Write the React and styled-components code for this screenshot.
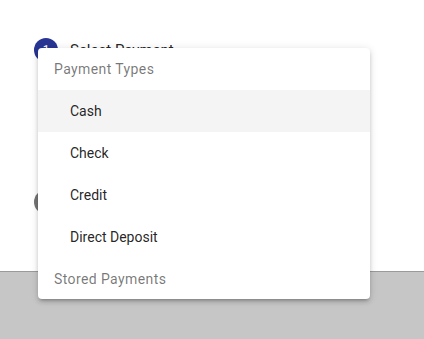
import React from "react";
import styled, { createGlobalStyle } from "styled-components";

const Global = createGlobalStyle`
  html, body { margin: 0; padding: 0; height: 100%; }
  body { font-family: Roboto, "Noto Sans", sans-serif; background: #c6c6c6; }
  #root { height: 100%; }
`;

const Page = styled.div`
  position: relative;
  display: flex;
  flex-direction: column;
  width: 424px;
  height: 339px;
  overflow: hidden;
`;

const Content = styled.div`
  height: 271px;
  background: #fff;
  display: flex;
  flex-direction: column;
  padding: 38px 0 0 34px;
  box-sizing: border-box;
  gap: 128px;
`;

const Footer = styled.div`
  flex: 1;
  background: #c6c6c6;
  border-top: 1px solid #9a9a9a;
`;

const Step = styled.div`
  display: flex;
  align-items: center;
  gap: 12px;
  height: 24px;
`;

const StepIcon = styled.div`
  width: 24px;
  height: 24px;
  border-radius: 50%;
  background: ${(p) => (p.$active ? "#283593" : "#757575")};
  color: #fff;
  font-size: 12px;
  display: flex;
  align-items: center;
  justify-content: center;
`;

const StepLabel = styled.span`
  font-size: 15px;
  color: rgba(0, 0, 0, 0.87);
`;

const Menu = styled.div`
  position: absolute;
  left: 38px;
  top: 48px;
  width: 332px;
  background: #fff;
  border-radius: 4px;
  box-shadow: 0 3px 3px -2px rgba(0, 0, 0, 0.2), 0 3px 4px 0 rgba(0, 0, 0, 0.14),
    0 1px 8px 0 rgba(0, 0, 0, 0.12);
  display: flex;
  flex-direction: column;
  overflow: hidden;
`;

const Row = styled.div`
  height: ${(p) => (p.$last ? "41px" : "42px")};
  display: flex;
  align-items: center;
  font-size: 14px;
  padding-left: ${(p) => (p.$header ? "16px" : "32px")};
  color: ${(p) => (p.$header ? "rgba(0,0,0,0.54)" : "rgba(0,0,0,0.87)")};
  background: ${(p) => (p.$selected ? "#f4f4f4" : "transparent")};
  letter-spacing: ${(p) => (p.$header ? "0.4px" : "0")};
`;

export default function App() {
  return (
    <Page>
      <Global />
      <Content>
        <Step>
          <StepIcon $active>1</StepIcon>
          <StepLabel>Select Payment</StepLabel>
        </Step>
        <Step>
          <StepIcon>2</StepIcon>
        </Step>
      </Content>
      <Footer />
      <Menu>
        <Row $header>Payment Types</Row>
        <Row $selected>Cash</Row>
        <Row>Check</Row>
        <Row>Credit</Row>
        <Row>Direct Deposit</Row>
        <Row $header $last>Stored Payments</Row>
      </Menu>
    </Page>
  );
}
